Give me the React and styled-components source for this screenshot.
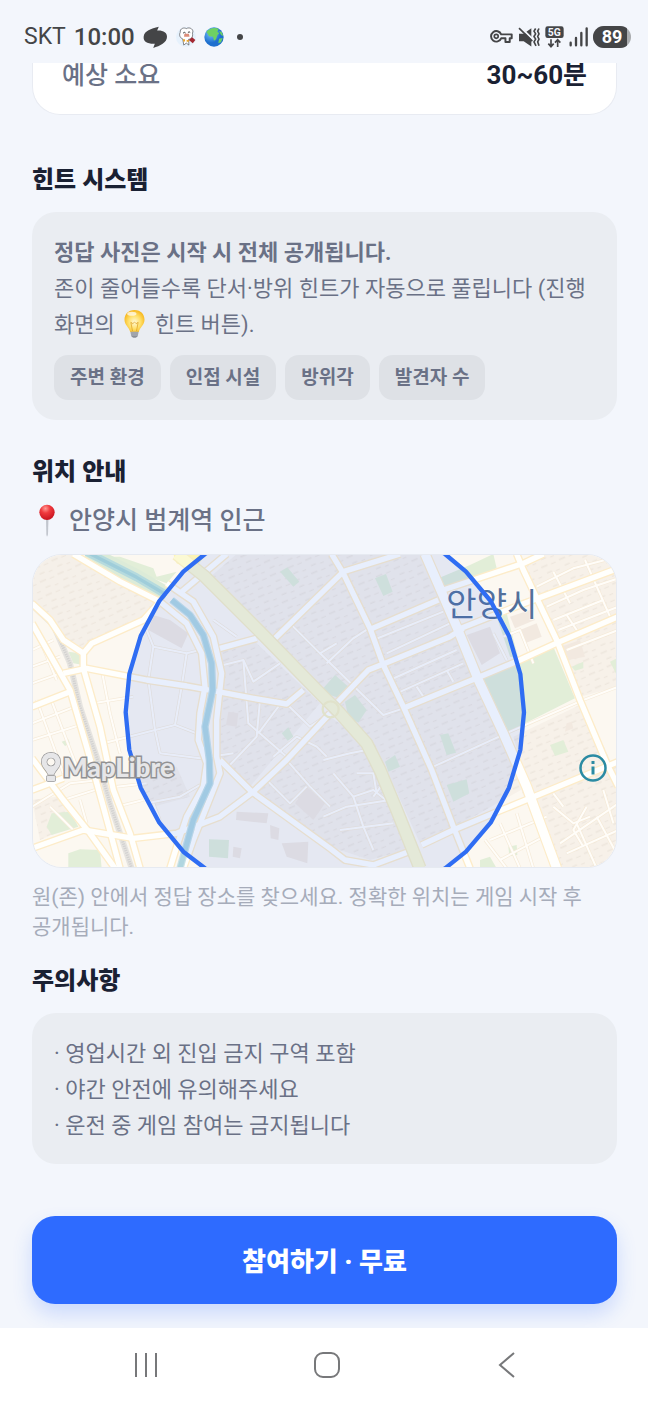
import React from "react";
import styled, { createGlobalStyle } from "styled-components";

const GlobalStyle = createGlobalStyle`
  *, *::before, *::after { box-sizing: border-box; }
  body {
    margin: 0;
    background: #f3f6fc;
    color: #1a2133;
    font-family: Roboto, "Noto Sans CJK KR", sans-serif;
    word-break: keep-all;
  }
`;

const Screen = styled.div`
  min-height: 100vh;
  display: flex;
  flex-direction: column;
`;

const StatusBar = styled.header`
  height: 63px;
  padding: 11px 17px 0 24px;
  display: flex;
  align-items: center;
  justify-content: space-between;
  color: #444547;
  line-height: 32px;
`;

const StatusGroup = styled.div`
  display: flex;
  align-items: center;
  gap: ${(p) => p.$gap}px;
  svg { display: block; flex: none; }
`;

const Carrier = styled.span`
  font-size: 23px;
`;

const Clock = styled.time`
  font-size: 24px;
  font-weight: 500;
`;

const Content = styled.main`
  padding: 0 31px 24px 32px;
  display: flex;
  flex-direction: column;
`;

const SummaryCard = styled.dl`
  margin: 0;
  padding: 0 29px 26px;
  overflow: hidden;
  display: flex;
  justify-content: space-between;
  background: #fff;
  border: 1px solid #e8ebf2;
  border-width: 0 1px 1px;
  border-radius: 0 0 28px 28px;
  line-height: 25px;
`;

const SummaryLabel = styled.dt`
  color: #6a7186;
  font-size: 25px;
  font-weight: 500;
`;

const SummaryValue = styled.dd`
  margin: 0;
  font-size: 26px;
  font-weight: 700;
`;

const Section = styled.section`
  margin-top: ${(p) => p.$top}px;
`;

const Heading = styled.h2`
  margin: 0;
  font-size: 24px;
  line-height: 36px;
  font-weight: 900;
`;

const Panel = styled.div`
  margin-top: 14px;
  padding: 23px 22px 20px;
  border-radius: 24px;
  background: #eaedf2;
  color: #6a7186;
  font-size: 22px;
  line-height: 36px;
`;

const Paragraph = styled.p`
  margin: 0;
  strong { font-weight: 700; display: block; }
  svg { vertical-align: -7px; }
`;

const ChipList = styled.ul`
  margin: 12px 0 0;
  padding: 0;
  list-style: none;
  display: flex;
  flex-wrap: wrap;
  gap: 9px;
`;

const Chip = styled.li`
  padding: 0 16px;
  border-radius: 14px;
  background: #dee1e6;
  font-size: 19px;
  line-height: 45px;
  font-weight: 600;
`;

const Place = styled.p`
  margin: 13px 0 15px;
  display: flex;
  align-items: center;
  gap: 6px;
  color: #6a7186;
  font-size: 25px;
  line-height: 36px;
  font-weight: 500;
`;

const MapFrame = styled.div`
  position: relative;
  aspect-ratio: 585 / 314;
  overflow: hidden;
  border: 1px solid #e6eaf1;
  border-radius: 30px;
  > svg { display: block; width: 100%; height: 100%; }
`;

const MapLogo = styled.a`
  position: absolute;
  left: 7px;
  bottom: 84px;
  display: flex;
  align-items: center;
  gap: 1px;
  color: #e6e6e8;
  font-family: Lato, sans-serif;
  font-size: 26px;
  line-height: 32px;
  font-weight: 900;
  text-decoration: none;
  -webkit-text-stroke: 3px #929294;
  paint-order: stroke fill;
`;

const InfoButton = styled.button`
  position: absolute;
  right: 8px;
  bottom: 84px;
  padding: 0;
  border: 0;
  background: none;
  svg { display: block; }
`;

const Note = styled.p`
  margin: 14px 0 0;
  color: #a6acba;
  font-size: 21px;
  line-height: 30px;
`;

const BulletList = styled.ul`
  margin: 0;
  padding: 0;
  list-style: none;
  li::before { content: "· "; white-space: pre; }
`;

const JoinButton = styled.button`
  margin-top: 52px;
  height: 88px;
  padding: 3px 0 0;
  border: 0;
  border-radius: 23px;
  background: #2e6bff;
  box-shadow: 0 10px 20px rgba(46, 107, 255, 0.2);
  color: #fff;
  font: 900 26px/36px Roboto, "Noto Sans CJK KR", sans-serif;
`;

const NavBar = styled.nav`
  margin-top: auto;
  height: 76px;
  padding-left: 5px;
  display: flex;
  justify-content: center;
  background: #fff;
`;

const NavButton = styled.button`
  width: 28%;
  padding: 0 0 2px;
  border: 0;
  background: none;
  svg { display: block; margin: auto; }
`;

function StatusLeft() {
  return (
    <StatusGroup $gap={8}>
      <Carrier>SKT</Carrier>
      <Clock>10:00</Clock>
      <svg width="25" height="23" viewBox="0 0 76 70">
        <path d="M2 32C4 14 24 8 48 2L43 14C62 13 73 20 73 33C73 51 52 61 31 67L36 54C14 55 0 48 2 32Z" fill="#444547" />
      </svg>
      <svg width="20" height="24" viewBox="0 0 62 72">
        <circle cx="31" cy="36" r="31" fill="#e6f1fc" />
        <path d="M13 22C12 8 26 6 32 10C43 3 57 14 51 24C54 38 45 43 39 43L40 61L32 55L24 61L21 42C12 39 9 29 13 22Z" fill="#fff" stroke="#48484c" strokeWidth="2" />
        <path d="M22 24q4-5 8 0M37 22q4-4 7 0" stroke="#333" strokeWidth="3" fill="none" />
        <path d="M26 26h14l2 9H25Z" fill="#dc8c78" />
        <path d="M40 45L50 37L60 45L52 55Z" fill="#a42832" />
        <path d="M22 43h6v7h-6Zm11 2h7v6h-7Z" fill="#e9a52b" />
      </svg>
      <svg width="20" height="20" viewBox="0 0 60 60">
        <defs><radialGradient id="sea" cx=".35" cy=".3"><stop stopColor="#79c4ff" /><stop offset="1" stopColor="#1e6fce" /></radialGradient></defs>
        <circle cx="30" cy="30" r="29" fill="url(#sea)" />
        <path d="M7 15C15 4 30 1 44 5L40 14L46 19L40 25L36 37L30 41L27 29L15 28L11 20Z" fill="#6ed163" />
        <path d="M45 12L53 15L58 27L51 24ZM45 35L56 33L51 46L43 49Z" fill="#6ed163" />
      </svg>
      <svg width="16" height="8" viewBox="0 0 16 8"><circle cx="8" cy="4" r="3" fill="#444547" /></svg>
    </StatusGroup>
  );
}

function StatusRight() {
  const dark = "#444547";
  return (
    <StatusGroup $gap={5}>
      <svg width="23" height="14" viewBox="0 0 70 42" fill="none" stroke={dark} strokeWidth="6" strokeLinejoin="round">
        <path d="M34 13H66V25H60V36H47V25H34A16 16 0 1 1 34 13Z" />
        <circle cx="19" cy="19" r="6" strokeWidth="5" />
      </svg>
      <svg width="22" height="21" viewBox="0 0 66 62">
        <path d="M3 20H17L40 3V58L17 42H3Z" fill={dark} />
        <path d="M6 -1L46 38" stroke="#f3f6fc" strokeWidth="6" />
        <path d="M3 3L43 42" stroke={dark} strokeWidth="5" />
        <path d="M53 4l-5 8 5 8-5 8 5 8-5 8 6 12M63 4l-4 8 4 8-4 8 4 8-4 8 4 12" fill="none" stroke={dark} strokeWidth="5" strokeLinejoin="round" />
      </svg>
      <svg width="19" height="22" viewBox="0 0 57 66">
        <rect x="1" y="1" width="55" height="35" rx="7" fill={dark} />
        <text x="28" y="29" textAnchor="middle" fill="#f3f6fc" fontSize="31" fontWeight="700" fontFamily="Roboto, sans-serif">5G</text>
        <path d="M18 40V61M10 53L18 62L26 53M38 63V42M30 50L38 41L46 50" fill="none" stroke={dark} strokeWidth="5" />
      </svg>
      <svg width="19" height="20" viewBox="0 0 57 60" stroke={dark} strokeWidth="7" strokeLinecap="round">
        <path d="M5 47V55M21 33V55M37 18V55M53 4V55" />
      </svg>
      <svg width="38" height="22" viewBox="0 0 38 22">
        <defs><clipPath id="pill"><rect width="38" height="22" rx="11" /></clipPath></defs>
        <g clipPath="url(#pill)"><rect width="38" height="22" fill="#a9abae" /><rect width="34" height="22" fill={dark} /></g>
        <text x="19" y="17" textAnchor="middle" fill="#fff" fontSize="18" fontWeight="700" fontFamily="Roboto, sans-serif">89</text>
      </svg>
    </StatusGroup>
  );
}

function Bulb() {
  return (
    <svg width="29" height="30" viewBox="0 0 84 90" role="img" aria-label="전구">
      <defs>
        <radialGradient id="glow" cx=".5" cy=".55" r=".55"><stop stopColor="#fff9d8" /><stop offset=".55" stopColor="#ffe06b" /><stop offset="1" stopColor="#f7b71d" /></radialGradient>
      </defs>
      <path d="M42 3C23 3 12 16 12 32C12 48 26 54 29 69H55C58 54 72 48 72 32C72 16 61 3 42 3Z" fill="url(#glow)" />
      <path d="M36 66L31 40L37 44L42 39L47 44L53 40L48 66" fill="none" stroke="#d99a18" strokeWidth="2" />
      <ellipse cx="34" cy="14" rx="14" ry="6" fill="#fff" opacity=".7" />
      <path d="M30 68H54L52 80C49 88 35 88 32 80Z" fill="#8b8f98" />
      <path d="M30 72H54M31 78H53" stroke="#cfd2d8" strokeWidth="2" />
    </svg>
  );
}

function Pin() {
  return (
    <svg width="31" height="34" viewBox="0 0 93 102" role="img" aria-label="위치">
      <defs><radialGradient id="head" cx=".4" cy=".25" r=".75"><stop stopColor="#ff9a94" /><stop offset=".4" stopColor="#f03a3e" /><stop offset="1" stopColor="#c8131f" /></radialGradient></defs>
      <path d="M42 46H49L48 90L45 98L43 90Z" fill="#aeb3bd" />
      <path d="M45 48V92" stroke="#eceef2" strokeWidth="2" />
      <circle cx="45" cy="25" r="23" fill="url(#head)" />
    </svg>
  );
}

// Map geometry: three map units to one pixel.
const BLOCKS = [
  "650,42 1210,42 1370,420 1520,740 1290,870 1200,910 1100,690 940,500 760,310 560,120",
  "600,330 700,300 900,490 690,740 590,640 610,460",
  "700,760 930,530 1060,620 1150,830 1160,930 1050,960 930,920",
  "1500,740 1795,660 1795,985 1600,985",
  "1540,42 1795,42 1795,440 1680,470 1600,300 1510,100",
  "1480,590 1690,490 1770,660 1530,765",
  "36,780 110,770 170,850 60,900", "370,680 470,680 510,770 400,800 360,740",
];

const HILL = "36,42 150,42 310,130 410,190 365,250 215,310 190,335 130,295 36,190";

const GREENS = [
  "780,95 802,82 838,125 820,140", "905,450 945,405 985,440 960,475 915,460",
  "975,485 1005,465 1040,510 1015,548 985,530", "1065,115 1098,102 1118,155 1090,168",
  "1385,405 1600,320 1665,475 1465,575", "1255,115 1350,75 1420,42 1430,85 1270,152",
  "1260,585 1285,580 1308,638 1280,645", "1280,735 1340,718 1348,760 1300,785",
  "1095,665 1125,645 1140,680 1105,695", "1590,615 1630,600 1645,635 1605,648",
  "145,335 180,340 190,375 160,370", "80,860 95,820 150,815 175,860 95,885",
  "145,940 180,928 240,930 245,985 145,985", "567,898 627,900 624,955 567,950",
  "785,580 805,562 820,590 803,602", "125,605 145,598 150,610 135,618",
  "1655,380 1690,365 1690,385 1665,392", "1770,365 1790,355 1790,405",
  "1380,960 1410,950 1430,985 1380,985", "1430,230 1460,220 1495,355 1470,350",
  "1465,920 1490,915 1492,945 1468,948", "300,50 400,85 410,110 470,95 440,130 370,105 270,50",
];

const BUILDINGS = [
  "400,225 450,240 505,280 485,325 385,270", "650,815 745,820 740,850 648,840",
  "640,920 665,925 660,955 638,950", "750,855 778,865 775,900 752,895",
  "785,910 865,905 862,970 800,950", "825,790 860,740 915,790 880,840",
  "1340,285 1410,260 1440,340 1385,375", "1500,270 1550,250 1565,290 1515,310",
  "1625,320 1680,300 1695,350 1645,360", "625,515 655,520 650,560 618,555",
  "1640,550 1655,545 1660,565 1635,575", "1470,230 1530,210 1545,240 1485,265",
];

const MAIN_ROADS = [
  "160,42 300,125 420,185 500,250 545,340 555,440 540,520 535,600 560,670 550,740 500,830 470,920 450,985",
  "440,130 520,185 580,290 605,400 590,540 590,650 600,700 560,800 520,900 490,985",
  "36,190 90,240 130,300 190,340 215,310 370,240 420,185",
  "130,400 200,385 380,420 500,438 610,458 700,475 800,492 850,450",
  "36,250 150,450 200,620 250,800 300,985", "190,340 190,385 240,560 280,750 330,880 360,985",
  "36,655 130,780 210,880 285,985", "36,925 190,870 340,895 470,880 600,830 700,755 800,660 930,520",
  "600,660 695,755 930,925 975,960 1060,975 1180,930", "36,500 150,455", "36,750 130,715",
  "755,305 970,95 1140,42", "480,160 620,42", "600,325 710,295",
  "935,42 970,100 1050,265 1090,375 1150,500 1235,690 1300,860 1350,985",
  "1490,42 1510,90 1610,300 1680,480 1760,670 1795,740",
  "1050,268 1255,180", "1270,150 1510,70 1570,42", "1310,270 1500,195 1795,85",
  "930,510 1045,390 1090,372 1290,290 1330,265", "1150,505 1380,410 1500,360 1620,305 1795,230",
  "1205,915 1300,870 1420,820 1530,775 1795,665",
];

const SMALL_ROADS = [
  "245,390 270,520 300,640", "380,270 400,320 385,420 405,570 420,640", "400,320 500,340 560,325",
  "500,340 485,440 465,555 530,580", "250,610 385,575 465,555", "220,490 340,470",
  "420,640 540,655 640,640", "380,790 480,770 540,735", "400,790 420,840",
  "36,330 100,300", "36,380 120,350", "36,430 135,395", "60,300 110,420", "36,550 165,500",
  "36,600 180,555", "50,480 130,700", "90,470 170,680", "36,800 150,730 240,720",
  "130,780 240,745", "90,800 160,870", "180,780 200,850", "290,740 380,730", "290,800 370,780",
  "610,375 670,360 700,425 780,370", "670,360 685,550 800,650", "720,480 710,590 625,680",
  "715,580 790,480", "800,492 870,560 930,520", "760,650 830,590 890,620 920,650",
  "800,660 870,740 930,800", "740,720 810,790 860,740", "580,240 650,290", "810,250 900,340 950,310",
  "920,370 1000,295 1070,250", "900,340 1090,525 1150,505", "1000,430 1045,390",
  "1100,340 1290,250", "1110,420 1310,330", "1130,460 1330,370", "1060,300 1270,215",
  "1190,440 1210,470", "1280,390 1300,425", "1240,680 1470,575 1690,480 1795,440",
  "910,660 990,640 1040,630", "940,700 1000,770 1060,750 1110,790", "910,830 980,800 1110,780",
  "1000,770 1030,860 1060,930", "1010,700 1060,700 1070,760", "960,870 1120,850", "1090,730 1060,770",
  "1550,140 1660,85 1795,50", "1580,200 1690,150 1795,115", "1600,240 1750,180", "1615,270 1795,200",
  "1600,95 1650,190", "1695,60 1770,230", "1640,225 1670,270", "1450,290 1500,270 1540,370",
  "1420,280 1460,360", "1640,330 1795,270", "1395,900 1460,985", "1440,850 1500,985",
  "1490,820 1540,985", "1410,900 1580,830", "1440,960 1590,880", "1600,800 1660,850 1710,830",
  "1620,910 1795,790", "1640,940 1795,870", "1670,850 1730,985", "1730,830 1795,950",
  "1750,750 1780,850", "1700,800 1660,870 1690,920", "1600,760 1630,800",
];

const RIVER = "455,180 510,225 550,285 575,370 578,450 555,560 568,660 570,730 520,840 480,985";
const CANAL = "200,36 350,112 440,165";
const RAIL = "36,195 100,255 150,370 180,500 230,650 270,790 335,985";
const HIGHWAY = "470,42 555,110 735,290 900,460 960,520 1040,610 1080,690 1130,810 1200,985";
const AVENUE = "1215,42 1310,260 1375,420 1450,580 1520,740 1610,985";
const ZONE = "418,-30 555,42 490,95 418,183 362,288 328,402 317,517 328,630 362,743 418,848 490,935 555,985 670,1060 1160,1060 1275,985 1338,935 1412,848 1467,743 1501,630 1512,517 1501,402 1467,288 1412,183 1338,95 1275,42 1160,-30 670,-30 555,42";

function ZoneMap() {
  return (
    <svg viewBox="39 45 1749 936" preserveAspectRatio="xMidYMid slice" role="img" aria-label="안양시 범계역 인근 지도">
      <defs>
        <pattern id="houses" width="58" height="44" patternUnits="userSpaceOnUse" patternTransform="rotate(-24)">
          <path d="M3 5h20v5H3ZM34 8h15v4H34ZM12 28h16v4H12ZM40 32h12v4H40Z" fill="#eee7de" />
        </pattern>
      </defs>
      <rect width="1830" height="1020" fill="#fcf8f1" />
      {BLOCKS.map((p) => <polygon key={p} points={p} fill="#f7f1e9" />)}
      {BLOCKS.map((p) => <polygon key={p} points={p} fill="url(#houses)" />)}
      <polygon points={HILL} fill="#f5f0e9" />
      <polygon points={HILL} fill="url(#houses)" />
      <polygon points="460,42 560,42 520,90 470,70" fill="#fcf4b4" />
      {GREENS.map((p) => <polygon key={p} points={p} fill="#e2eed8" />)}
      {BUILDINGS.map((p) => <polygon key={p} points={p} fill="#f2e9e0" />)}
      <g fill="none" strokeLinejoin="round">
        <g stroke="#f5ead8" strokeWidth="10">{SMALL_ROADS.map((p) => <polyline key={p} points={p} />)}</g>
        <g stroke="#fffdf9" strokeWidth="6">{SMALL_ROADS.map((p) => <polyline key={p} points={p} />)}</g>
        <polyline points={RAIL} stroke="#e6e4e0" strokeWidth="18" />
        <polyline points={RAIL} stroke="#d3d2d1" strokeWidth="9" strokeDasharray="4 3" />
        <polyline points={CANAL} stroke="#dcebd8" strokeWidth="48" />
        <polyline points={CANAL} stroke="#b5dade" strokeWidth="24" />
        <polyline points={CANAL} stroke="#9fcdda" strokeWidth="10" />
        <g stroke="#fdecc9" strokeWidth="24">{MAIN_ROADS.map((p) => <polyline key={p} points={p} />)}</g>
        <polyline points={AVENUE} stroke="#fdecc9" strokeWidth="34" />
        <g stroke="#fffffd" strokeWidth="16">{MAIN_ROADS.map((p) => <polyline key={p} points={p} />)}</g>
        <polyline points={AVENUE} stroke="#fffffd" strokeWidth="27" />
        <polyline points={RIVER} stroke="#c9e2e6" strokeWidth="22" />
        <polyline points={RIVER} stroke="#b0d6e0" strokeWidth="15" />
        <polyline points={HIGHWAY} stroke="#f6edc4" strokeWidth="40" />
        <polyline points={HIGHWAY} stroke="#fbf9d4" strokeWidth="32" />
        <circle cx="932" cy="508" r="24" stroke="#f7f1c5" strokeWidth="7" />
      </g>
      <text x="1279" y="228" fill="#53709a" stroke="#fff" strokeOpacity=".6" strokeWidth="5" paintOrder="stroke" fontSize="99" fontFamily='"Noto Sans CJK KR", sans-serif'>안양시</text>
      <polygon points={ZONE} fill="#2e6bff" fillOpacity=".11" stroke="#2f6df3" strokeWidth="13" strokeLinejoin="round" />
    </svg>
  );
}

export default function App() {
  return (
    <Screen>
      <GlobalStyle />
      <StatusBar>
        <StatusLeft />
        <StatusRight />
      </StatusBar>
      <Content>
        <SummaryCard>
          <SummaryLabel>예상 소요</SummaryLabel>
          <SummaryValue>30~60분</SummaryValue>
        </SummaryCard>
        <Section $top={47}>
          <Heading>힌트 시스템</Heading>
          <Panel>
            <Paragraph>
              <strong>정답 사진은 시작 시 전체 공개됩니다.</strong>
              존이 줄어들수록 단서·방위 힌트가 자동으로 풀립니다 (진행 화면의 <Bulb /> 힌트 버튼).
            </Paragraph>
            <ChipList>
              {["주변 환경", "인접 시설", "방위각", "발견자 수"].map((label) => <Chip key={label}>{label}</Chip>)}
            </ChipList>
          </Panel>
        </Section>
        <Section $top={34}>
          <Heading>위치 안내</Heading>
          <Place><Pin />안양시 범계역 인근</Place>
          <MapFrame>
            <ZoneMap />
            <MapLogo href="https://maplibre.org/">
              <svg width="22" height="32" viewBox="0 0 66 96" fill="#e6e6e8" stroke="#929294" strokeWidth="4">
                <path fillRule="evenodd" d="M33 5C16 5 5 17 5 33C5 48 18 56 25 71H41C48 56 61 48 61 33C61 17 50 5 33 5ZM33 20A13 13 0 1 1 32.900 20Z" />
                <rect x="20" y="75" width="26" height="15" rx="4" />
              </svg>
              MapLibre
            </MapLogo>
            <InfoButton type="button" aria-label="지도 정보">
              <svg width="30" height="30" viewBox="0 0 30 30" fill="none" stroke="#2b8ba3">
                <circle cx="15" cy="15" r="12.500" strokeWidth="2.500" />
                <path d="M15 8V11M15 13.500V21.500" strokeWidth="3" />
              </svg>
            </InfoButton>
          </MapFrame>
          <Note>원(존) 안에서 정답 장소를 찾으세요. 정확한 위치는 게임 시작 후 공개됩니다.</Note>
        </Section>
        <Section $top={21}>
          <Heading>주의사항</Heading>
          <Panel>
            <BulletList>
              <li>영업시간 외 진입 금지 구역 포함</li>
              <li>야간 안전에 유의해주세요</li>
              <li>운전 중 게임 참여는 금지됩니다</li>
            </BulletList>
          </Panel>
        </Section>
        <JoinButton type="button">참여하기 · 무료</JoinButton>
      </Content>
      <NavBar>
        <NavButton type="button" aria-label="최근 앱">
          <svg width="26" height="28" viewBox="0 0 26 28" stroke="#77787a" strokeWidth="2"><path d="M3 2V26M13 2V26M23 2V26" /></svg>
        </NavButton>
        <NavButton type="button" aria-label="홈">
          <svg width="28" height="28" viewBox="0 0 28 28" fill="none" stroke="#77787a" strokeWidth="2"><rect x="2" y="2" width="24" height="24" rx="8" /></svg>
        </NavButton>
        <NavButton type="button" aria-label="뒤로">
          <svg width="18" height="28" viewBox="0 0 18 28" fill="none" stroke="#77787a" strokeWidth="2"><path d="M16 2L2 14L16 26" /></svg>
        </NavButton>
      </NavBar>
    </Screen>
  );
}
